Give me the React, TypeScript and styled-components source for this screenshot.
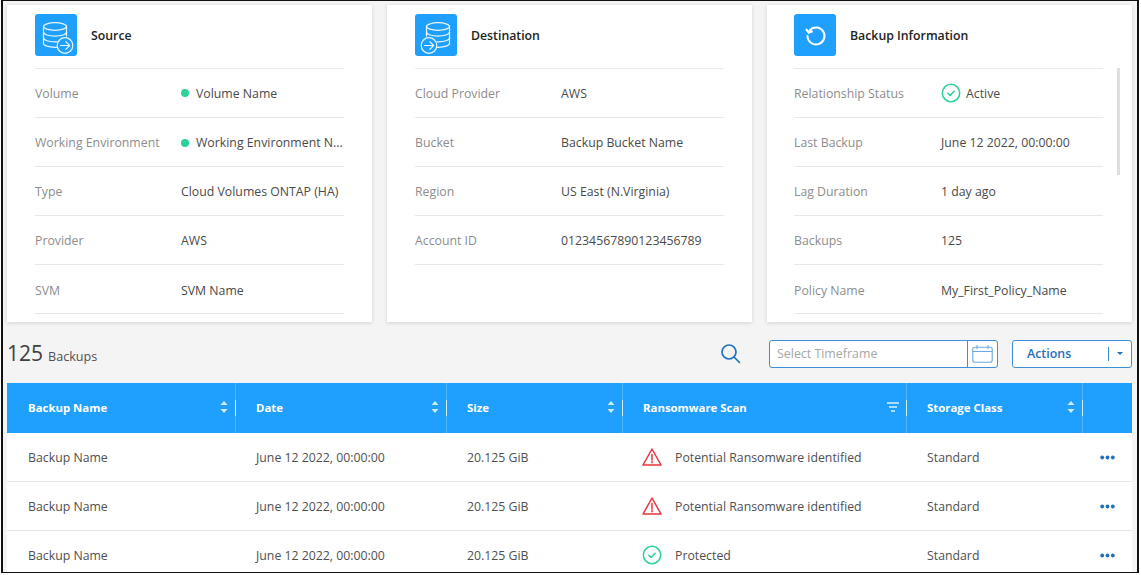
import React from "react";
import styled, { createGlobalStyle } from "styled-components";

const Global = createGlobalStyle`
  html, body { margin: 0; padding: 0; background: #fff; }
  body { font-family: "Open Sans", "Liberation Sans", sans-serif; }
  * { box-sizing: border-box; }
`;

const Frame = styled.div`
  width: 1138px;
  height: 573px;
  border: solid #111;
  border-width: 1px 2px 1px 2px;
  margin-left: 1px;
  background: #f4f4f4;
  overflow: hidden;
  padding: 4px 5px 0 4px;
`;
const Cards = styled.div`
  display: grid;
  grid-template-columns: repeat(3, 365px);
  column-gap: 15px;
`;
const Card = styled.section<{ $inset?: number }>`
  height: 317px;
  background: #fff;
  box-shadow: 0 1px 4px rgba(0, 0, 0, 0.14);
  padding: 9px ${(p) => 56 - (p.$inset ?? 28)}px 0 ${(p) => p.$inset ?? 28}px;
  position: relative;
`;
const CardHead = styled.div`
  display: flex;
  align-items: center;
  gap: 14px;
  height: 54.5px;
  border-bottom: 1.5px solid #eaeaea;
  padding-bottom: 11px;
`;
const IconTile = styled.div`
  width: 42px;
  height: 42px;
  background: #1fa0ff;
  border-radius: 3px;
  display: flex;
  flex: none;
`;
const CardTitle = styled.h3`
  margin: 0;
  font-size: 12.3px;
  font-weight: 600;
  color: #222;
`;
const InfoRow = styled.div`
  display: flex;
  align-items: center;
  height: 49.2px;
  padding-top: 1.5px;
  border-bottom: 1.5px solid #e8e8e8;
  font-size: 12.3px;
`;
const InfoLabel = styled.div<{ $width: number }>`
  width: ${(p) => p.$width}px;
  flex: none;
  color: #8d8d8d;
  white-space: nowrap;
`;
const InfoValue = styled.div`
  flex: 1;
  min-width: 0;
  display: flex;
  align-items: center;
  color: #4a4a4a;
  white-space: nowrap;
`;
const Dot = styled.span`
  width: 8px;
  height: 8px;
  border-radius: 50%;
  background: #2ad29a;
  margin-right: 7px;
  flex: none;
`;
const StatusIcon = styled.span`
  display: flex;
  margin-right: 5px;
`;
const Scrollbar = styled.div`
  position: absolute;
  right: 12px;
  top: 63px;
  width: 3px;
  height: 107px;
  background: #dedede;
`;
const Toolbar = styled.div`
  height: 61px;
  display: flex;
  align-items: center;
  padding-top: 2px;
`;
const Count = styled.div`
  display: flex;
  align-items: baseline;
  gap: 5px;
  font-size: 21px;
  color: #404040;
  flex: 1;
  margin-top: -2px;
  span { font-size: 12.6px; color: #505050; }
`;
const SearchBtn = styled.div`
  display: flex;
  margin-right: 28px;
`;
const Timeframe = styled.div`
  width: 229px;
  height: 28px;
  display: flex;
  border: 1px solid #3f8fd8;
  border-radius: 3px;
  background: #fff;
  margin-right: 14px;
`;
const TimeText = styled.div`
  flex: 1;
  padding-left: 7px;
  line-height: 26px;
  font-size: 12.4px;
  color: #a6a6a6;
`;
const CalBox = styled.div`
  width: 30px;
  border-left: 1px solid #3f8fd8;
  display: flex;
  align-items: center;
  justify-content: center;
`;
const Actions = styled.div`
  width: 120px;
  height: 28px;
  display: flex;
  align-items: center;
  border: 1px solid #3f8fd8;
  border-radius: 3px;
  background: #fff;
  padding-left: 14px;
  font-size: 12.4px;
  font-weight: 600;
  color: #1f6fbd;
`;
const ActionsLabel = styled.span`
  flex: 1;
`;
const Caret = styled.span`
  display: flex;
  align-items: center;
  gap: 8px;
  padding-right: 8px;
  &::before { content: ""; width: 1px; height: 14px; background: #3f8fd8; }
  &::after { content: ""; border: 3px solid transparent; border-top: 3.5px solid #1f6fbd; border-bottom: 0; }
`;
const cols = "229px 211px 176px 284px 176px 49px";
const HeadRow = styled.div`
  display: grid;
  grid-template-columns: ${cols};
  height: 50px;
  background: #1fa0ff;
`;
const HeadCell = styled.div`
  display: flex;
  align-items: center;
  padding: 0 7px 2px 20px;
  font-size: 11.4px;
  font-weight: 700;
  color: #fff;
  position: relative;
  border-right: 1px solid rgba(255, 255, 255, 0.22);
  &:first-child { padding-left: 21px; }
  &:last-child { border-right: 0; }
`;
const HeadLabel = styled.span`
  flex: 1;
`;
const HeadTick = styled.span`
  position: absolute;
  right: -1px;
  top: 17px;
  width: 1px;
  height: 16px;
  background: rgba(255, 255, 255, 0.75);
`;
const Row = styled.div`
  display: grid;
  grid-template-columns: ${cols};
  height: 49.2px;
  background: #fff;
  border-bottom: 1.5px solid #e8e8e8;
  font-size: 12.3px;
  color: #4f4f4f;
`;
const Cell = styled.div`
  display: flex;
  align-items: center;
  padding-left: 20px;
  white-space: nowrap;
  &:first-child { padding-left: 21px; }
`;
const ScanCell = styled(Cell)`
  padding-left: 19px;
  gap: 13px;
`;
const MoreCell = styled(Cell)`
  padding-left: 17px;
`;

const Source = () => (
  <svg width="42" height="42" viewBox="0 0 42 42" fill="none" stroke="#fff" strokeOpacity="0.9" strokeWidth="1.2" strokeLinecap="round" strokeLinejoin="round">
    <ellipse cx="20" cy="12.5" rx="11.5" ry="3.8" />
    <path d="M8.500 12.500V29.500c0 2.100 5.100 3.800 11.500 3.800 1 0 2-.05 3-.15M31.500 12.500V22" />
    <path d="M8.500 18.300c0 2.100 5.100 3.800 11.500 3.800s11.500-1.700 11.500-3.800M8.500 24.100c0 2.100 5.100 3.800 11.500 3.800 .8 0 1.600-.03 2.300-.1" />
    <circle cx="30" cy="31.500" r="7.800" fill="#1fa0ff" />
    <path d="M25.500 31.500h9M30.800 27.700l3.800 3.800-3.800 3.800" />
  </svg>
);
const Destination = () => (
  <svg width="42" height="42" viewBox="0 0 42 42" fill="none" stroke="#fff" strokeOpacity="0.9" strokeWidth="1.2" strokeLinecap="round" strokeLinejoin="round">
    <ellipse cx="23" cy="12.5" rx="11.5" ry="3.800" />
    <path d="M11.500 12.500V22M34.500 12.500V29.500c0 2.100-5.100 3.800-11.500 3.800-.8 0-1.600-.03-2.300-.1" />
    <path d="M11.500 18.300c0 2.100 5.100 3.800 11.500 3.800s11.500-1.700 11.500-3.800M22 27.900c.3 0 .7 0 1 0 6.400 0 11.500-1.700 11.500-3.800" />
    <circle cx="14" cy="31.500" r="7.800" fill="#1fa0ff" />
    <path d="M9.500 31.500h9M14.800 27.700l3.800 3.800-3.800 3.800" />
  </svg>
);
const Restore = () => (
  <svg width="42" height="42" viewBox="0 0 42 42" fill="none" stroke="#fff" strokeWidth="2" strokeLinecap="round" strokeLinejoin="round">
    <path d="M15.500 16.500A8.500 8.500 0 1 1 13.500 22" />
    <path d="M12.500 15.500l2 3.200 3.500-1.200" />
  </svg>
);
const Check = () => (
  <svg width="20" height="20" viewBox="0 0 20 20" fill="none" stroke="#2ad29a" strokeWidth="1.5" strokeLinecap="round" strokeLinejoin="round" style={{ flex: "none" }}>
    <circle cx="10" cy="10" r="8.700" />
    <path d="M6.800 10.200l2.300 2.200 4-4.200" />
  </svg>
);
const Warn = () => (
  <svg width="20" height="20" viewBox="0 0 20 20" fill="none" stroke="#e8353f" strokeWidth="1.5" strokeLinejoin="round" style={{ flex: "none" }}>
    <path d="M10 2L19 18H1z" />
    <path d="M10 7.500v5.500M10 14.600v1.200" strokeLinecap="round" />
  </svg>
);
const Sort = () => (
  <svg width="8" height="14" viewBox="0 0 8 14" fill="rgba(255,255,255,.8)" style={{ flex: "none" }}>
    <path d="M4 1l3.500 4h-7zM4 13L.5 9h7z" />
  </svg>
);
const Filter = () => (
  <svg width="12" height="10" viewBox="0 0 12 10" stroke="rgba(255,255,255,.85)" strokeWidth="1.3" style={{ flex: "none" }}>
    <path d="M0 1h12M2 5h8M4 9h4" />
  </svg>
);
const More = () => (
  <svg width="15" height="5" viewBox="0 0 15 5" fill="#1f6fbd">
    <circle cx="2.200" cy="2.500" r="1.900" />
    <circle cx="7.500" cy="2.500" r="1.900" />
    <circle cx="12.800" cy="2.500" r="1.900" />
  </svg>
);
const Search = () => (
  <svg width="21" height="21" viewBox="0 0 21 21" fill="none" stroke="#1f75c4" strokeWidth="1.7" strokeLinecap="round">
    <circle cx="9" cy="9" r="7" />
    <path d="M14 14l5.500 5.500" />
  </svg>
);
const Calendar = () => (
  <svg width="21" height="18" viewBox="0 0 21 18" fill="none" stroke="#6aa9e0" strokeWidth="1.1" strokeLinecap="round">
    <rect x=".8" y="2.200" width="19.400" height="15" rx="2" />
    <path d="M.8 6.500h19.400M5 .5v3M16 .5v3" />
  </svg>
);

type Info = { label: string; value: string; dot?: boolean; check?: boolean };
const source: Info[] = [
  { label: "Volume", value: "Volume Name", dot: true },
  { label: "Working Environment", value: "Working Environment N...", dot: true },
  { label: "Type", value: "Cloud Volumes ONTAP (HA)" },
  { label: "Provider", value: "AWS" },
  { label: "SVM", value: "SVM Name" },
];
const dest: Info[] = [
  { label: "Cloud Provider", value: "AWS" },
  { label: "Bucket", value: "Backup Bucket Name" },
  { label: "Region", value: "US East (N.Virginia)" },
  { label: "Account ID", value: "01234567890123456789" },
];
const info: Info[] = [
  { label: "Relationship Status", value: "Active", check: true },
  { label: "Last Backup", value: "June 12 2022, 00:00:00" },
  { label: "Lag Duration", value: "1 day ago" },
  { label: "Backups", value: "125" },
  { label: "Policy Name", value: "My_First_Policy_Name" },
];

const Rows = ({ items, labelWidth = 146 }: { items: Info[]; labelWidth?: number }) => (
  <>
    {items.map((r) => (
      <InfoRow key={r.label}>
        <InfoLabel $width={labelWidth}>{r.label}</InfoLabel>
        <InfoValue>
          {r.dot && <Dot />}
          {r.check && <StatusIcon><Check /></StatusIcon>}
          {r.value}
        </InfoValue>
      </InfoRow>
    ))}
  </>
);

const backups = [
  { scan: "Potential Ransomware identified", warn: true },
  { scan: "Potential Ransomware identified", warn: true },
  { scan: "Protected", warn: false },
];

export default function App() {
  return (
    <Frame>
      <Global />
      <Cards>
        <Card>
          <CardHead>
            <IconTile><Source /></IconTile>
            <CardTitle>Source</CardTitle>
          </CardHead>
          <Rows items={source} />
        </Card>
        <Card>
          <CardHead>
            <IconTile><Destination /></IconTile>
            <CardTitle>Destination</CardTitle>
          </CardHead>
          <Rows items={dest} />
        </Card>
        <Card $inset={27}>
          <CardHead>
            <IconTile><Restore /></IconTile>
            <CardTitle>Backup Information</CardTitle>
          </CardHead>
          <Rows items={info} labelWidth={147} />
          <Scrollbar />
        </Card>
      </Cards>
      <Toolbar>
        <Count>125 <span>Backups</span></Count>
        <SearchBtn><Search /></SearchBtn>
        <Timeframe>
          <TimeText>Select Timeframe</TimeText>
          <CalBox><Calendar /></CalBox>
        </Timeframe>
        <Actions>
          <ActionsLabel>Actions</ActionsLabel>
          <Caret />
        </Actions>
      </Toolbar>
      <HeadRow>
        <HeadCell><HeadLabel>Backup Name</HeadLabel><Sort /><HeadTick /></HeadCell>
        <HeadCell><HeadLabel>Date</HeadLabel><Sort /><HeadTick /></HeadCell>
        <HeadCell><HeadLabel>Size</HeadLabel><Sort /><HeadTick /></HeadCell>
        <HeadCell><HeadLabel>Ransomware Scan</HeadLabel><Filter /><HeadTick /></HeadCell>
        <HeadCell><HeadLabel>Storage Class</HeadLabel><Sort /><HeadTick /></HeadCell>
        <HeadCell />
      </HeadRow>
      {backups.map((b, i) => (
        <Row key={i}>
          <Cell>Backup Name</Cell>
          <Cell>June 12 2022, 00:00:00</Cell>
          <Cell>20.125 GiB</Cell>
          <ScanCell>{b.warn ? <Warn /> : <Check />}{b.scan}</ScanCell>
          <Cell>Standard</Cell>
          <MoreCell><More /></MoreCell>
        </Row>
      ))}
    </Frame>
  );
}
